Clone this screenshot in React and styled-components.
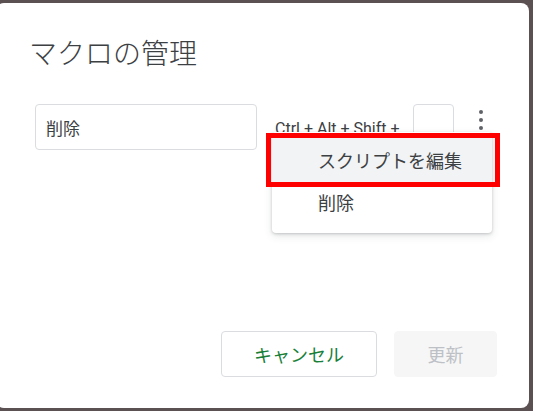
import React from 'react';
import styled, { createGlobalStyle } from 'styled-components';

const Global = createGlobalStyle`
  html, body {
    margin: 0;
    padding: 0;
    background: #5b5153;
    overflow: hidden;
  }
  body {
    font-family: Roboto, "Noto Sans CJK JP", "Noto Sans", sans-serif;
  }
`;

const Dialog = styled.div`
  box-sizing: border-box;
  width: 533px;
  height: 405px;
  margin: 3px 0 0 -4px;
  background: #fff;
  border-radius: 8px;
  display: flex;
  flex-direction: column;
  padding: 31px 32px 31px 39px;
`;

const Title = styled.h1`
  margin: 0 0 0 -6px;
  height: 36px;
  line-height: 36px;
  font-size: 28px;
  font-weight: 300;
  color: #3c4043;
  font-family: "Noto Sans CJK JP", sans-serif;
`;

const Row = styled.div`
  position: relative;
  display: flex;
  align-items: center;
  margin-top: 34px;
  height: 46px;
`;

const NameBox = styled.div`
  box-sizing: border-box;
  width: 222px;
  height: 46px;
  border: 1px solid #dadce0;
  border-radius: 4px;
  display: flex;
  align-items: center;
  padding-left: 10px;
  font-size: 17px;
  color: #3c4043;
  font-family: "Noto Sans CJK JP", sans-serif;
`;

const Shortcut = styled.span`
  margin-left: 18px;
  font-size: 16px;
  color: #3c4043;
  font-family: Roboto, sans-serif;
  padding-top: 2px;
  white-space: nowrap;
`;

const KeyBox = styled.div`
  box-sizing: border-box;
  width: 41px;
  height: 46px;
  margin-left: 13px;
  border: 1px solid #dadce0;
  border-radius: 4px;
  flex: none;
`;

const Kebab = styled.div`
  align-self: flex-start;
  margin: 4px 0 0 15px;
  width: 24px;
  height: 24px;
  display: flex;
  flex-direction: column;
  align-items: center;
  justify-content: center;
  gap: 4px;
  flex: none;
`;

const Dot = styled.span`
  width: 4px;
  height: 4px;
  border-radius: 50%;
  background: #5f6368;
`;

const Menu = styled.div`
  position: absolute;
  left: 237px;
  top: 28px;
  width: 220px;
  padding: 6px 0 11px;
  background: #fff;
  border-radius: 4px;
  box-shadow: 0 1px 3px rgba(60, 64, 67, 0.25), 0 3px 8px rgba(60, 64, 67, 0.12);
  z-index: 2;
`;

const MenuItem = styled.div`
  height: ${p => (p.active ? 44 : 40)}px;
  display: flex;
  align-items: center;
  padding-left: 46px;
  font-size: 18px;
  color: #3c4043;
  background: ${p => (p.active ? '#f1f3f4' : 'transparent')};
  font-family: "Noto Sans CJK JP", sans-serif;
`;

const RedFrame = styled.div`
  position: absolute;
  box-sizing: border-box;
  left: 231px;
  top: 29px;
  width: 234px;
  height: 54px;
  border: 5px solid #ff0000;
  z-index: 3;
`;

const Footer = styled.div`
  margin-top: auto;
  display: flex;
  justify-content: flex-end;
  gap: 17px;
`;

const Button = styled.button`
  box-sizing: border-box;
  height: 46px;
  width: ${p => p.w}px;
  border-radius: 4px;
  font-size: 18px;
  font-family: "Noto Sans CJK JP", sans-serif;
  border: 1px solid ${p => (p.disabled ? '#f6f6f6' : '#dadce0')};
  background: ${p => (p.disabled ? '#f6f6f6' : '#fff')};
  color: ${p => (p.disabled ? '#bdc1c6' : '#188038')};
  padding: 0;
`;

export default function App() {
  return (
    <>
      <Global />
      <Dialog>
        <Title>マクロの管理</Title>
        <Row>
          <NameBox>削除</NameBox>
          <Shortcut>Ctrl + Alt + Shift +</Shortcut>
          <KeyBox />
          <Kebab>
            <Dot />
            <Dot />
            <Dot />
          </Kebab>
          <Menu>
            <MenuItem active>スクリプトを編集</MenuItem>
            <MenuItem>削除</MenuItem>
          </Menu>
          <RedFrame />
        </Row>
        <Footer>
          <Button w={156}>キャンセル</Button>
          <Button w={103} disabled>更新</Button>
        </Footer>
      </Dialog>
    </>
  );
}
